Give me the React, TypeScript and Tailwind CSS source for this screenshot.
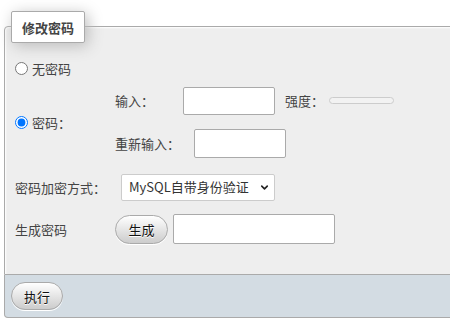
import { ChevronDown } from 'lucide-react'

const font = { fontFamily: '"Noto Sans CJK SC", "Noto Sans", sans-serif' }

function PmaButton({ label, className = '' }: { label: string; className?: string }) {
  return (
    <button
      className={`rounded-full border border-[#aaa] bg-gradient-to-b from-white to-[#ccc] text-[13px] leading-none text-[#111] shadow-[0_1px_0_#fff] [text-shadow:0_1px_0_#fff] ${className}`}
    >
      {label}
    </button>
  )
}

function TextBox({ className = '' }: { className?: string }) {
  return <input type="text" className={`rounded-[2px] border border-[#aaa] bg-white outline-none ${className}`} />
}

export default function App() {
  return (
    <div className="w-[450px] h-[321px] overflow-hidden bg-white text-[13px] text-[#444]" style={font}>
      <div className="pt-[26px] pl-[4px] w-[470px]">
        {/* Main fieldset */}
        <div className="relative h-[249px] rounded-tl-[4px] border border-[#aaa] bg-[#eee] shadow-[inset_1px_1px_2px_#fff]">
          {/* Legend */}
          <div className="absolute left-[6px] top-[-16px] flex h-[32px] w-[74px] items-center justify-center rounded-[2px] border border-[#aaa] bg-white font-bold leading-none text-[#444] shadow-[3px_3px_15px_#bbb]">
            修改密码
          </div>

          {/* No password */}
          <div className="mt-[28px] flex h-[26px] items-center pl-[10px]">
            <input type="radio" name="pw" className="m-0 h-[13px] w-[13px]" />
            <span className="ml-[4px] leading-none">无密码</span>
          </div>

          {/* Password */}
          <div className="flex h-[82px] items-center">
            <div className="flex w-[110px] items-center pl-[10px]">
              <input type="radio" name="pw" defaultChecked className="m-0 h-[13px] w-[13px]" />
              <span className="ml-[4px] leading-none">密码：</span>
            </div>
            <div className="flex flex-col gap-[14px]">
              <div className="flex items-center">
                <span className="w-[68px] leading-none">输入：</span>
                <TextBox className="h-[28px] w-[92px]" />
                <span className="ml-[10px] w-[44px] leading-none">强度：</span>
                <div className="h-[7px] w-[65px] rounded-full border border-[#ccc] bg-[#f2f2f2]" />
              </div>
              <div className="flex items-center">
                <span className="w-[79px] leading-none">重新输入：</span>
                <TextBox className="h-[29px] w-[92px]" />
              </div>
            </div>
          </div>

          {/* Hashing */}
          <div className="mt-[10px] flex h-[28px] items-center pl-[10px]">
            <span className="w-[106px] leading-none">密码加密方式：</span>
            <div className="relative">
              <select className="h-[27px] w-[154px] appearance-none rounded-[2px] border border-[#ccc] bg-white pl-[7px] text-[13px] text-[#333] outline-none">
                <option>MySQL自带身份验证</option>
              </select>
              <ChevronDown
                size={11}
                strokeWidth={3.5}
                className="pointer-events-none absolute right-[5px] top-[8px] text-[#222]"
              />
            </div>
          </div>

          {/* Generate */}
          <div className="mt-[12px] flex h-[32px] items-center pl-[10px]">
            <span className="w-[100px] leading-none">生成密码</span>
            <PmaButton label="生成" className="h-[29px] w-[53px]" />
            <TextBox className="ml-[5px] h-[30px] w-[162px]" />
          </div>
        </div>

        {/* Footer */}
        <div className="flex h-[43px] items-center rounded-bl-[4px] border border-t-0 border-[#aaa] bg-[#d3dce3] pl-[6px]">
          <PmaButton label="执行" className="h-[28px] w-[52px]" />
        </div>
      </div>
    </div>
  )
}
